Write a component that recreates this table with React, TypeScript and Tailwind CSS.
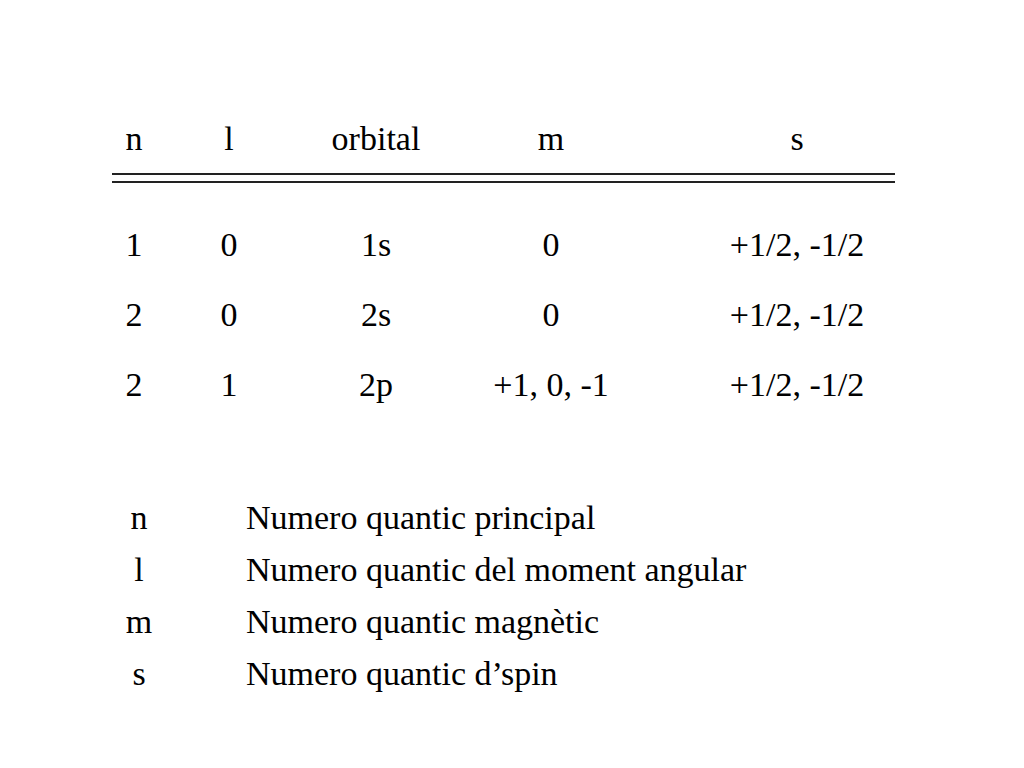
const rows = [
  ["1", "0", "1s", "0", "+1/2, -1/2"],
  ["2", "0", "2s", "0", "+1/2, -1/2"],
  ["2", "1", "2p", "+1, 0, -1", "+1/2, -1/2"],
];

const legend = [
  ["n", "Numero quantic principal"],
  ["l", "Numero quantic del moment angular"],
  ["m", "Numero quantic magnètic"],
  ["s", "Numero quantic d\u2019spin"],
];

const cols = "grid grid-cols-[96px_94px_200px_150px_342px] text-center";

export default function App() {
  return (
    <div
      className="w-[1024px] h-[768px] bg-white text-black text-[34px] overflow-hidden"
      style={{ fontFamily: '"Liberation Serif", "Times New Roman", serif' }}
    >
      <div className="pt-[119px] pl-[86px]">
        <div className={`${cols} leading-[40px]`}>
          <div>n</div>
          <div>l</div>
          <div>orbital</div>
          <div>m</div>
          <div>s</div>
        </div>

        <div className="ml-[26px] mt-[14px] w-[783px] h-[10px] border-t-2 border-b-2 border-[#222]" />

        <div className="mt-[42px] flex flex-col gap-[30px]">
          {rows.map((r, i) => (
            <div key={i} className={`${cols} leading-[40px]`}>
              {r.map((c, j) => (
                <div key={j}>{c}</div>
              ))}
            </div>
          ))}
        </div>

        <div className="mt-[87px] flex flex-col">
          {legend.map(([sym, desc]) => (
            <div key={sym} className="flex leading-[52px]">
              <div className="w-[106px] text-center">{sym}</div>
              <div className="pl-[54px]">{desc}</div>
            </div>
          ))}
        </div>
      </div>
    </div>
  );
}
